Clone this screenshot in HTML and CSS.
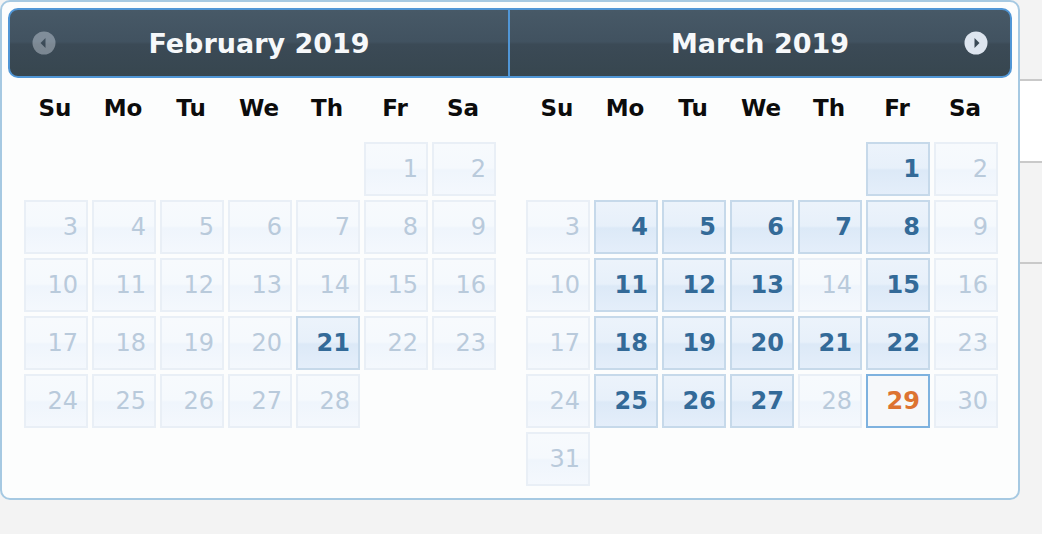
FILE: index.html
```html
<!DOCTYPE html>
<html lang="en">
<head>
<meta charset="UTF-8">
<meta name="viewport" content="width=device-width, initial-scale=1.0">
<title>Pick a date</title>
<link rel="stylesheet" href="styles.css">
</head>
<body>
<div class="page">
    <div class="row first"></div>
    <div class="row white"></div>
    <div class="row"></div>
</div>

<div class="picker">
    <div class="group">
        <div class="head left">
            <span class="nav prev" title="Prev">
                <svg viewBox="0 0 24 24" width="24" height="24"><circle cx="12" cy="12" r="11.5" fill="#dde5ef"/><polygon points="13.5,7 8.5,12 13.5,17" fill="#3a4956"/></svg>
            </span>
            <span class="title">February 2019</span>
            <span class="nav"></span>
        </div>
        <div class="names">
            <span>Su</span><span>Mo</span><span>Tu</span><span>We</span><span>Th</span><span>Fr</span><span>Sa</span>
        </div>
        <div class="days">
            <span class="blank"></span><span class="blank"></span><span class="blank"></span><span class="blank"></span><span class="blank"></span>
            <span class="day off">1</span><span class="day off">2</span>
            <span class="day off">3</span><span class="day off">4</span><span class="day off">5</span><span class="day off">6</span><span class="day off">7</span><span class="day off">8</span><span class="day off">9</span>
            <span class="day off">10</span><span class="day off">11</span><span class="day off">12</span><span class="day off">13</span><span class="day off">14</span><span class="day off">15</span><span class="day off">16</span>
            <span class="day off">17</span><span class="day off">18</span><span class="day off">19</span><span class="day off">20</span><a class="day on">21</a><span class="day off">22</span><span class="day off">23</span>
            <span class="day off">24</span><span class="day off">25</span><span class="day off">26</span><span class="day off">27</span><span class="day off">28</span>
        </div>
    </div>
    <div class="group">
        <div class="head right">
            <span class="nav"></span>
            <span class="title">March 2019</span>
            <span class="nav next" title="Next">
                <svg viewBox="0 0 24 24" width="24" height="24"><circle cx="12" cy="12" r="11.5" fill="#dde5ef"/><polygon points="10.5,7 15.5,12 10.5,17" fill="#3a4956"/></svg>
            </span>
        </div>
        <div class="names">
            <span>Su</span><span>Mo</span><span>Tu</span><span>We</span><span>Th</span><span>Fr</span><span>Sa</span>
        </div>
        <div class="days">
            <span class="blank"></span><span class="blank"></span><span class="blank"></span><span class="blank"></span><span class="blank"></span>
            <a class="day on">1</a><span class="day off">2</span>
            <span class="day off">3</span><a class="day on">4</a><a class="day on">5</a><a class="day on">6</a><a class="day on">7</a><a class="day on">8</a><span class="day off">9</span>
            <span class="day off">10</span><a class="day on">11</a><a class="day on">12</a><a class="day on">13</a><span class="day off">14</span><a class="day on">15</a><span class="day off">16</span>
            <span class="day off">17</span><a class="day on">18</a><a class="day on">19</a><a class="day on">20</a><a class="day on">21</a><a class="day on">22</a><span class="day off">23</span>
            <span class="day off">24</span><a class="day on">25</a><a class="day on">26</a><a class="day on">27</a><span class="day off">28</span><a class="day today">29</a><span class="day off">30</span>
            <span class="day off">31</span>
        </div>
    </div>
</div>
</body>
</html>
```

FILE: styles.css
```css
body {
    margin: 0;
    padding: 0;
    background-color: #f3f3f3;
    font-family: "DejaVu Sans", Verdana, sans-serif;
}

/* page behind the popup */
.row {
    height: 79px;
    border-bottom: 2px solid #c9c9c9;
}
.row.white {
    height: 80px;
    background-color: #fff;
}
.row:last-child {
    height: 99px;
}

/* the datepicker popup */
.picker {
    position: absolute;
    top: 0;
    left: 0;
    width: 1020px;
    box-sizing: border-box;
    padding: 6px 6px 12px;
    display: flex;
    background-color: #fcfdfd;
    border: 2px solid #a6c9e2;
    border-radius: 10px;
}
.group {
    width: 502px;
}
.head {
    height: 70px;
    box-sizing: border-box;
    display: grid;
    grid-template-columns: 68px 1fr 68px;
    align-items: center;
    background: linear-gradient(to bottom, #475967 0%, #415260 48%, #3b4a56 52%, #37464f 100%);
    border: 2px solid #5096d6;
    color: #f6f8fa;
}
.head.left {
    border-radius: 10px 0 0 10px;
}
.head.right {
    border-left: none;
    border-radius: 0 10px 10px 0;
}
.title {
    text-align: center;
    font-size: 27px;
    font-weight: bold;
}
.nav {
    display: flex;
    justify-content: center;
}
.nav svg {
    display: block;
}
.prev {
    opacity: 0.4;
}

.names {
    height: 64px;
    box-sizing: border-box;
    padding: 0 14px 4px 15px;
    display: grid;
    grid-template-columns: repeat(7, 64px);
    column-gap: 4px;
    align-items: center;
}
.names span {
    text-align: center;
    font-size: 23px;
    font-weight: bold;
    color: #0c0c0c;
}

.days {
    padding: 0 14px 0 16px;
    display: grid;
    grid-template-columns: repeat(7, 64px);
    grid-auto-rows: 54px;
    gap: 4px;
}
.day {
    box-sizing: border-box;
    padding-right: 8px;
    display: flex;
    align-items: center;
    justify-content: flex-end;
    font-size: 24px;
    font-weight: bold;
    color: #336a98;
    border: 2px solid #c6d9ea;
    background: linear-gradient(to bottom, #ecf3fb 0%, #e7f0fa 48%, #dce9f7 52%, #e4eefa 100%);
    cursor: pointer;
}
.day.off {
    font-weight: normal;
    color: #b9cadb;
    border-color: #e9eff6;
    background: linear-gradient(to bottom, #f7fafd 0%, #f5f9fd 48%, #eff5fc 52%, #f4f8fd 100%);
    cursor: default;
}
.day.today {
    color: #dd7331;
    border-color: #7eb2df;
    background: #f6f8fa;
}
```
